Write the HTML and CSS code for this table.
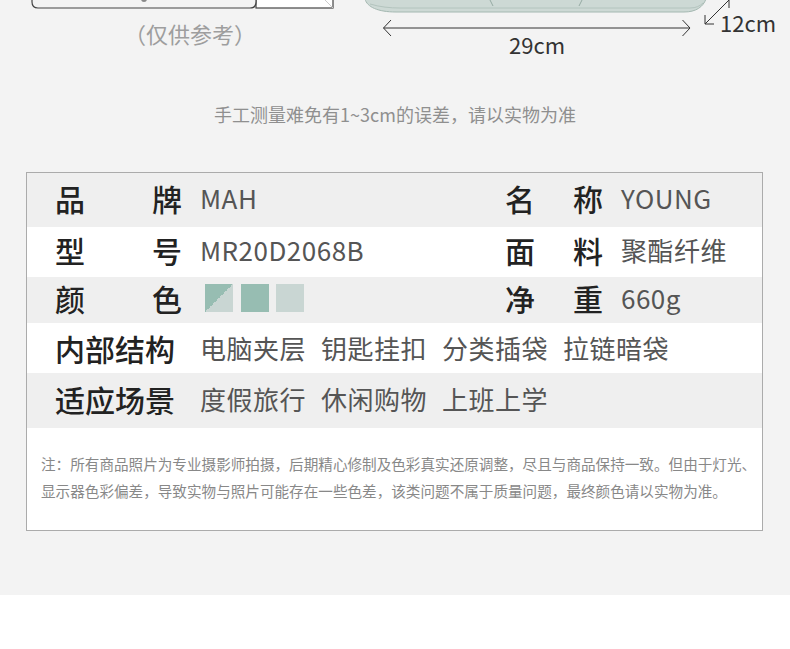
FILE: index.html
```html
<!DOCTYPE html>
<html lang="zh-CN">
<head>
    <meta charset="UTF-8">
    <title>商品参数</title>
    <link rel="stylesheet" href="styles.css">
</head>
<body>
<div class="page">
    <div class="figure">
        <svg class="figure-art" width="790" height="40" viewBox="0 0 790 40">
            <!-- size chart, cropped at the top -->
            <rect x="256" y="-4" width="77" height="12" fill="#fff" stroke="#444" stroke-width="1.2"/>
            <path d="M32 -2 V2 Q32 8 38 8 H250 Q256 8 256 2 V-2" fill="#f3f3f3" stroke="#444" stroke-width="1.2"/>
            <line x1="325" y1="0" x2="333" y2="8" stroke="#ccc"/>
            <circle cx="144" cy="-1" r="3" fill="#888"/>

            <!-- bag -->
            <path d="M365 -1 C367 7 378 12 396 12 H684 C696 12 703 7 706 -1 Z" fill="#cdd9d5" stroke="#a4b8b1"/>
            <path d="M370 4 C380 7 390 8 400 8 H690 C696 8 700 6 703 3" fill="none" stroke="#b3c4be"/>
            <line x1="490" y1="0" x2="493" y2="6" stroke="#95aaa3"/>
            <line x1="582" y1="0" x2="579" y2="6" stroke="#95aaa3"/>

            <!-- width arrow -->
            <g fill="none" stroke="#333" stroke-width="1">
                <line x1="383.5" y1="28" x2="690" y2="28"/>
                <polyline points="391,20 383.5,28 391,36"/>
                <polyline points="682.5,20 690,28 682.5,36"/>
                <!-- depth arrow -->
                <line x1="705" y1="24" x2="729" y2="0"/>
                <polyline points="705,15 705,24 714,24"/>
                <polyline points="720,-1 729,-1 729,8"/>
            </g>
        </svg>
        <span class="dim dim-w">29cm</span>
        <span class="dim dim-d">12cm</span>
        <p class="caption">（仅供参考）</p>
    </div>

    <p class="tip">手工测量难免有1~3cm的误差，请以实物为准</p>

    <div class="specs">
        <div class="row row-tall grey">
            <div class="cell">
                <span class="label">品牌</span>
                <span class="value">MAH</span>
            </div>
            <div class="cell">
                <span class="label label-r">名称</span>
                <span class="value">YOUNG</span>
            </div>
        </div>
        <div class="row">
            <div class="cell">
                <span class="label">型号</span>
                <span class="value">MR20D2068B</span>
            </div>
            <div class="cell">
                <span class="label label-r">面料</span>
                <span class="value">聚酯纤维</span>
            </div>
        </div>
        <div class="row row-short grey">
            <div class="cell">
                <span class="label">颜色</span>
                <span class="swatches">
                    <i class="swatch swatch-mix"></i>
                    <i class="swatch swatch-green"></i>
                    <i class="swatch swatch-grey"></i>
                </span>
            </div>
            <div class="cell">
                <span class="label label-r">净重</span>
                <span class="value">660g</span>
            </div>
        </div>
        <div class="row row-full">
            <span class="label">内部结构</span>
            <span class="values">
                <span class="value">电脑夹层</span>
                <span class="value">钥匙挂扣</span>
                <span class="value">分类插袋</span>
                <span class="value">拉链暗袋</span>
            </span>
        </div>
        <div class="row row-full row-tall row-lift grey">
            <span class="label">适应场景</span>
            <span class="values">
                <span class="value">度假旅行</span>
                <span class="value">休闲购物</span>
                <span class="value">上班上学</span>
            </span>
        </div>
        <p class="note">注：所有商品照片为专业摄影师拍摄，后期精心修制及色彩真实还原调整，尽且与商品保持一致。但由于灯光、<br>显示器色彩偏差，导致实物与照片可能存在一些色差，该类问题不属于质量问题，最终颜色请以实物为准。</p>
    </div>
</div>
</body>
</html>
```

FILE: styles.css
```css
body { margin: 0; background: #fff; font-family: "Noto Sans CJK SC", "Noto Sans", sans-serif; }
.page { background: #f3f3f3; padding-bottom: 64px; }

/* size chart */
.figure { position: relative; height: 70px; }
.figure-art { display: block; }
.dim { position: absolute; color: #333; line-height: 1; }
.dim-w { left: 509px; top: 33px; font-size: 22px; }
.dim-d { left: 720px; top: 11px; font-size: 22px; }
.caption { position: absolute; left: 124px; top: 22px; margin: 0; font-size: 22px; line-height: 1; color: #9e9e9e; }

.tip { margin: 32px 0 0; text-align: center; font-size: 18px; line-height: 24px; color: #8f8f8f; }

/* spec table */
.specs { margin: 46px 27px 0 26px; border: 1px solid #ababab; background: #fff; }
.row { display: grid; grid-template-columns: 478px 1fr; align-items: center; height: 50px; box-sizing: border-box; }
.row-tall { height: 54px; }
.row-full.row-tall { height: 55px; }
.row-short { height: 46px; }
.grey { background: #efefef; }
.cell { display: flex; align-items: center; gap: 18px; padding-bottom: 4px; }
.cell:first-child { padding-left: 28px; }
.row-full { display: flex; gap: 18px; padding-left: 28px; }
.row-lift { padding-bottom: 4px; }

.label { width: 127px; font-size: 30px; line-height: 1; color: #222; font-weight: 500; text-align: justify; text-align-last: justify; white-space: nowrap; }
.row-full .label { text-align-last: left; }
.label-r { width: 98px; }
.value { font-size: 26px; line-height: 1; color: #555; letter-spacing: 0.5px; white-space: nowrap; }
.values { display: flex; gap: 15px; }

.swatches { display: flex; gap: 7.5px; padding-left: 5px; }
.swatch { display: block; width: 28px; height: 28px; }
.swatch-mix { background: linear-gradient(to bottom right, #97bdb2 50%, #c9d6d3 50%); }
.swatch-green { background: #97bdb2; }
.swatch-grey { background: #c9d6d3; }

.note { margin: 0; padding: 22px 0 26px 14px; font-size: 14.6px; line-height: 27px; color: #888; white-space: nowrap; }
```
